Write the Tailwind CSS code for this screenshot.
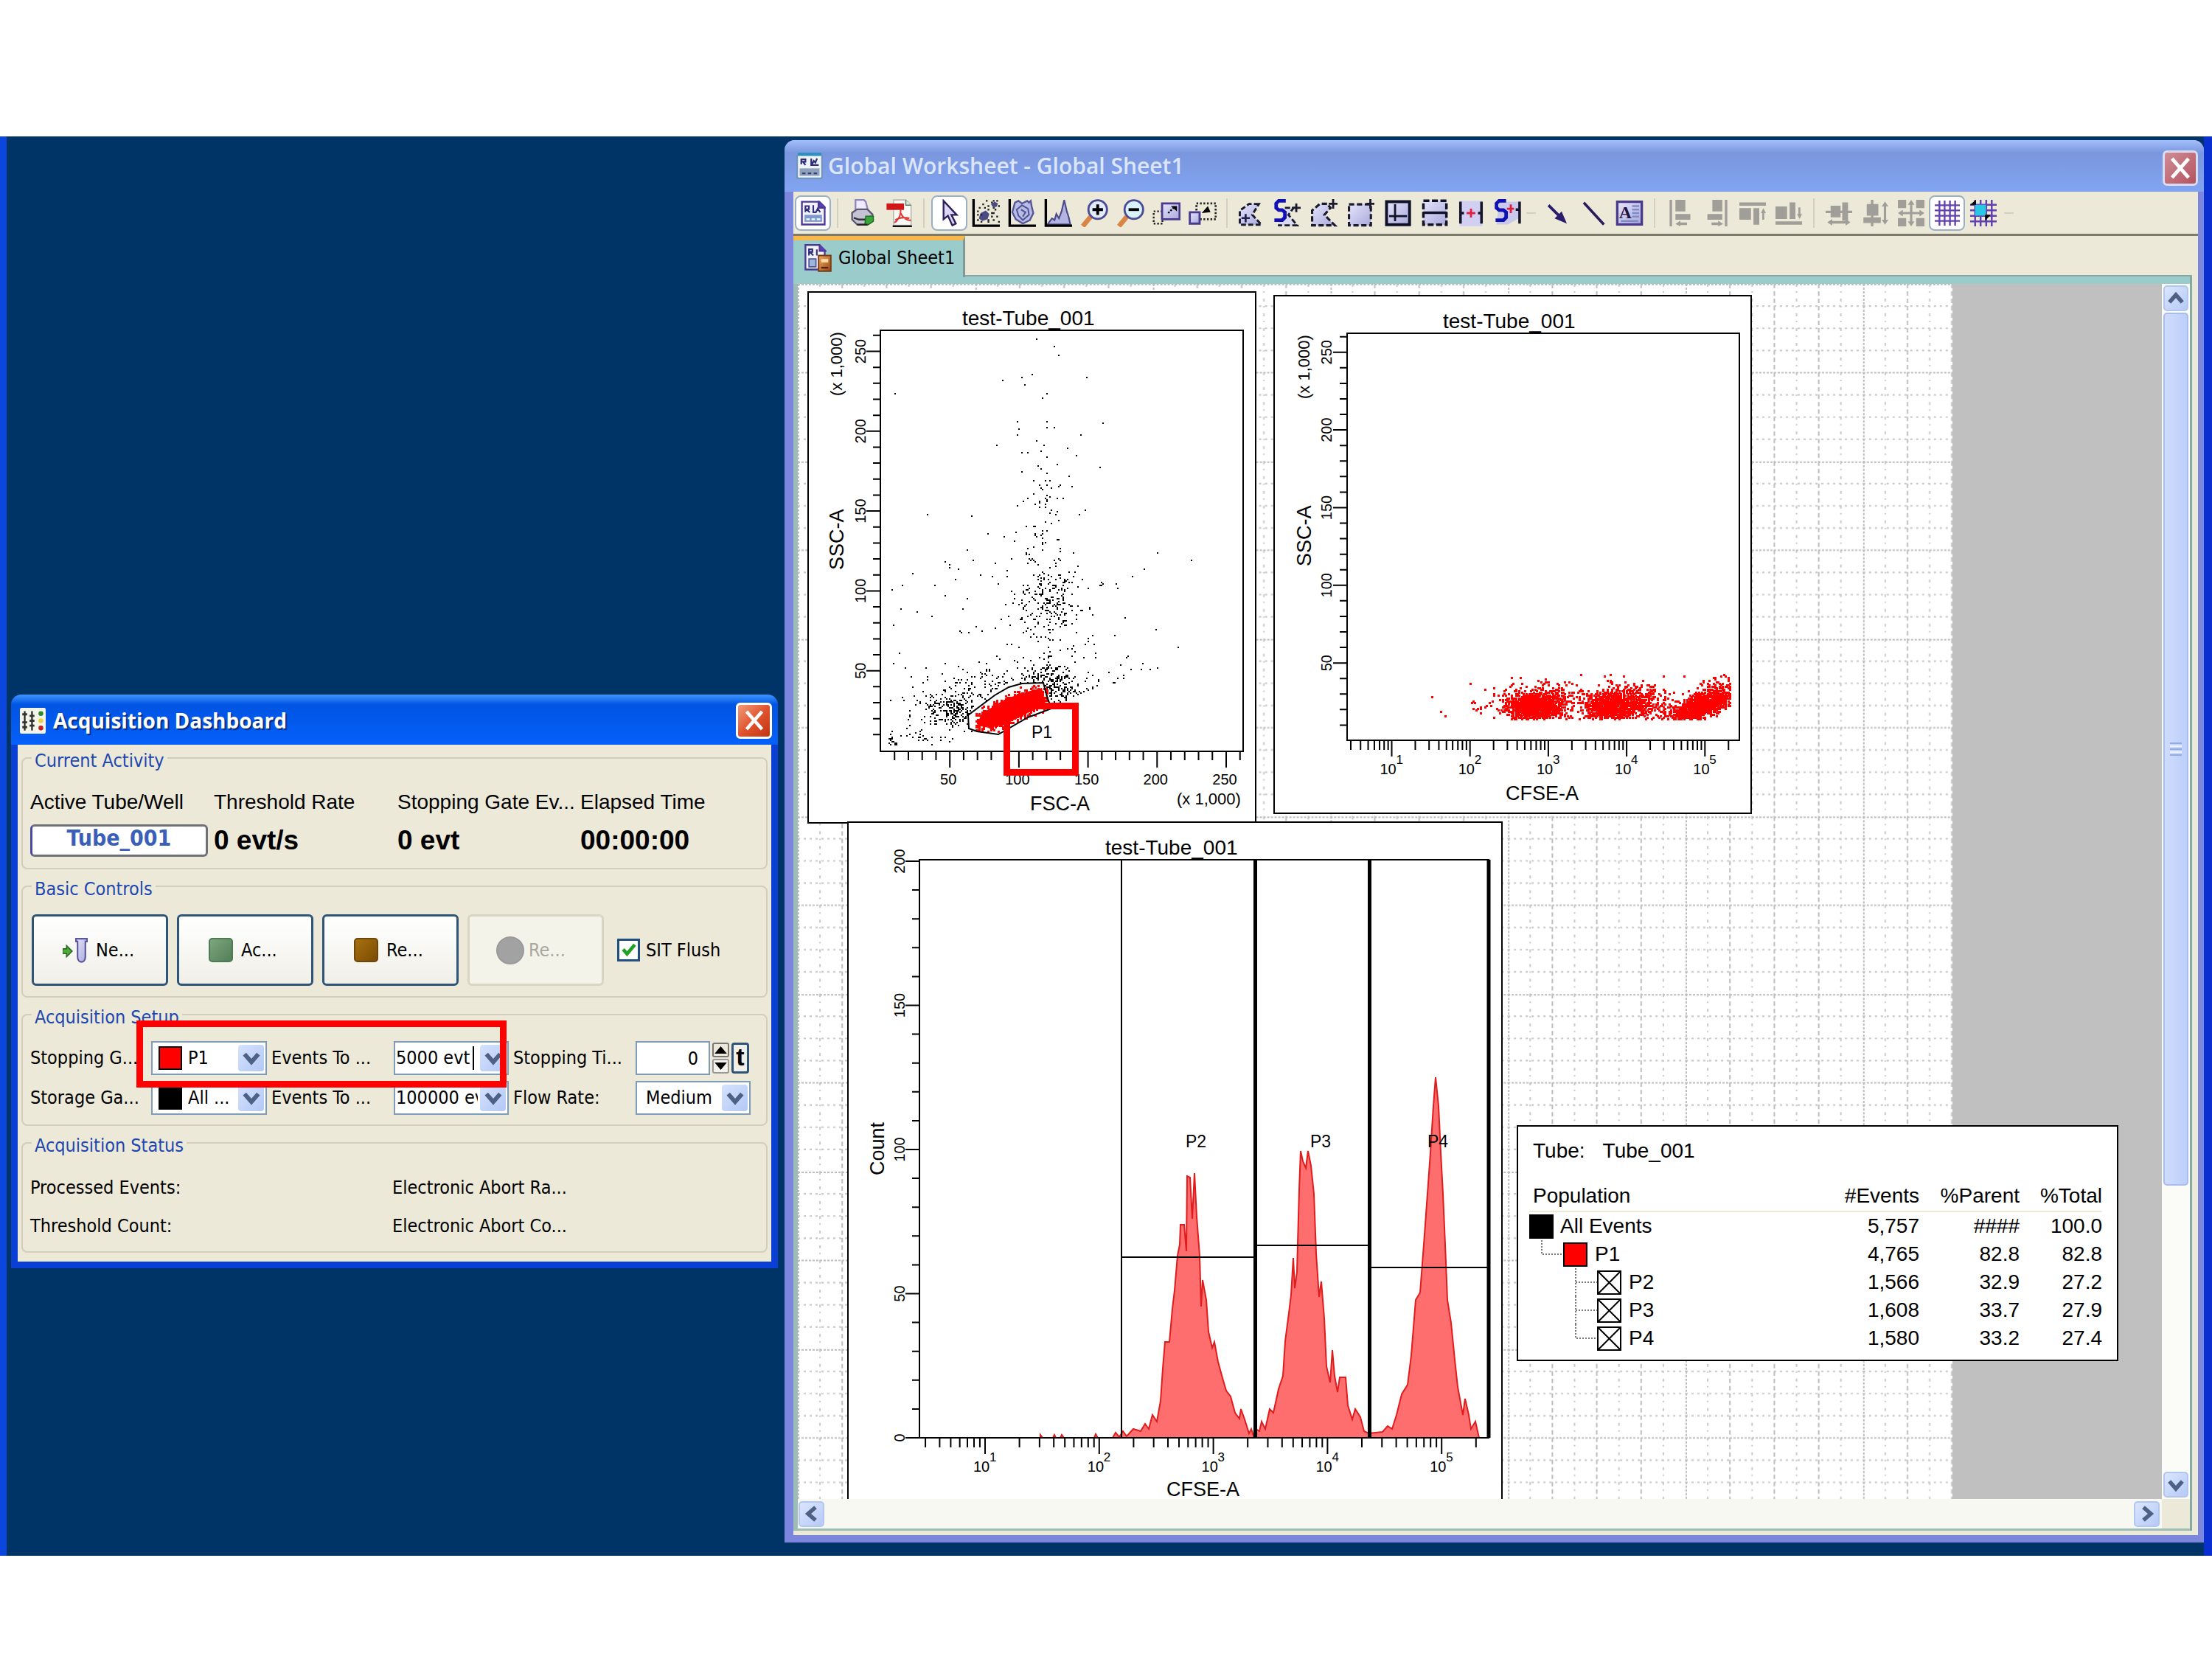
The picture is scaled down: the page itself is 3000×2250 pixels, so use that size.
<!DOCTYPE html>
<html lang="en">
<head>
<meta charset="utf-8">
<title>Global Worksheet - Global Sheet1</title>
<script src="https://cdn.jsdelivr.net/npm/@tailwindcss/browser@4"></script>
</head>
<body class="flex min-h-screen flex-col bg-white pt-[185px] pb-[140px] font-['DejaVu_Sans_Condensed','Noto_Sans',sans-serif] text-[25px] leading-[34px] text-black">
<svg class="absolute size-0" aria-hidden="true">
  <defs>
    <linearGradient id="lav" x1="0" y1="0" x2="1" y2="1"><stop offset="0" stop-color="#e6e4fb"/><stop offset="1" stop-color="#a9a9dc"/></linearGradient>
    <linearGradient id="wood" x1="0" y1="0" x2="1" y2="1"><stop offset="0" stop-color="#f0a860"/><stop offset="1" stop-color="#9a4a10"/></linearGradient>
    <pattern id="grid" width="240.8" height="240.8" patternUnits="userSpaceOnUse">
      <g fill="none" stroke="#bcbcbc" stroke-width="2">
        <path d="M60.2 0v240.8M120.4 0v240.8M180.6 0v240.8" stroke-dasharray="6 4"/>
        <path d="M30.1 0v240.8M90.3 0v240.8M150.5 0v240.8M210.7 0v240.8" stroke-dasharray="4 6 2 8" stroke="#c8c8c8"/>
        <path d="M0 30.1h240.8M0 60.2h240.8M0 90.3h240.8M0 150.5h240.8M0 180.6h240.8M0 210.7h240.8" stroke-dasharray="3 5" stroke="#c8c8c8"/>
        <path d="M1 0v240.8M0 1h240.8M0 120.4h240.8" stroke-dasharray="3 2"/>
      </g>
    </pattern>
    <symbol id="chev" viewBox="0 0 12 12"><path d="M2.5 4l3.5 4 3.5-4" fill="none" stroke="#4d6185" stroke-width="2.2"/></symbol>
    <symbol id="sheet" viewBox="0 0 16 16"><path d="M1.5 1.5h10l3 3v10h-13z" fill="#f4f2ff" stroke="#4b3a94"/><path d="M11 1v4h4" fill="#5a3fb4" stroke="#4b3a94"/><path d="M3.500 7.500V4h2v1.800h-1.500l2 1.700M8 3.500v4h1.500l1-2 1.500 2" fill="none" stroke="#30307c" stroke-width=".9"/><path d="M3 9h10v4H3z" fill="#7d9ad0"/><path d="M4 11.500h2m1 0h2m1 0h2" stroke="#fff"/></symbol>
  </defs>
</svg>

<main class="relative flex-1 overflow-hidden border-r-[11px] border-l-[9px] border-r-[#0a2fd0] border-l-[#0b46de] bg-[#003366]">

  <!-- Acquisition Dashboard -->
  <section class="absolute top-[757px] left-[6px] w-[1040px] rounded-t-[14px] bg-[#0a3fd6] px-[9px] pb-[9px]">
    <header class="-mx-[9px] flex h-[68px] items-center rounded-t-[14px] bg-linear-to-b from-[#3d95ff] via-[#0054e3] via-20% to-[#0560fa] pt-[2px] pr-[8px] pl-[12px]">
      <svg class="mr-[10px] size-[35px]" viewBox="0 0 16 16"><rect width="16" height="16" rx="1" fill="#f3f5ea"/><path d="M3 2v12M7.500 2v12" stroke="#222" stroke-width="1"/><path d="M1.500 4h3M1.500 9h3M1.500 12h3M6 5h3M6 8h3M6 11h3" stroke="#333" stroke-width="1.300"/><circle cx="13" cy="3.500" r="1.500" fill="#2f8a2f"/><circle cx="13" cy="8" r="1.500" fill="#e8cf4a"/><circle cx="13" cy="12.500" r="1.500" fill="#c02020"/></svg>
      <h1 class="flex-1 font-['Open_Sans',sans-serif] text-[28px] leading-[40px] font-bold text-white [text-shadow:2px_2px_1px_#0a2a80]">Acquisition Dashboard</h1>
      <button class="flex size-[49px] items-center justify-center rounded-[6px] border-[3px] border-white bg-linear-to-br from-[#f09a78] via-[#e0532e] to-[#c03410]" aria-label="Close dashboard"><svg class="size-[30px]" viewBox="0 0 10 10"><path d="M1.500 1l7 8M8.500 1l-7 8" stroke="#fff" stroke-width="1.500"/></svg></button>
    </header>
    <div class="flex flex-col gap-[7px] bg-[#ece9d8] px-[5px] pt-[2px] pb-[12px]">
      <fieldset class="rounded-[8px] border-2 border-[#d2ceba] px-[10px] pb-[15px]">
        <legend class="ml-[2px] px-[4px] pt-[8px] leading-[24px] text-[#2046b0]">Current Activity</legend>
        <div class="grid grid-cols-[249px_249px_248px_1fr] gap-y-[13px] pt-[27px] font-['Liberation_Sans',sans-serif] text-[28px] whitespace-nowrap">
          <span>Active Tube/Well</span><span>Threshold Rate</span><span>Stopping Gate Ev...</span><span>Elapsed Time</span>
          <button class="mr-[8px] h-[44px] rounded-[6px] border-[3px] border-[#6f7078] border-l-[#4a48a0] bg-white pb-[6px] font-['DejaVu_Sans_Condensed','Noto_Sans',sans-serif] text-[30px] leading-[32px] font-bold text-[#3a5fb8]">Tube_001</button>
          <output class="text-[37px] leading-[44px] font-bold">0 evt/s</output>
          <output class="text-[37px] leading-[44px] font-bold">0 evt</output>
          <output class="text-[37px] leading-[44px] font-bold">00:00:00</output>
        </div>
      </fieldset>

      <fieldset class="rounded-[8px] border-2 border-[#d2ceba] px-[12px] pb-[14px]">
        <legend class="px-[4px] pt-[8px] leading-[24px] text-[#2046b0]">Basic Controls</legend>
        <div class="flex items-center gap-[12px] pt-[22px]">
          <button class="flex h-[97px] w-[185px] items-center gap-[11px] rounded-[6px] border-[3px] border-[#2f5479] bg-linear-to-b from-white to-[#f0efe8] pl-[39px]"><svg class="size-[34px]" viewBox="0 0 16 16"><path d="M0 7h2.500V5l3.500 3.500-3.500 3.500V10H0z" fill="#4fae3a" stroke="#2c6b22" stroke-width=".8"/><path d="M8.500 .500h7v1.800h-1V12c0 4.500-5 4.500-5 0V2.300h-1z" fill="url(#lav)" stroke="#5b56a0"/></svg>Ne...</button>
          <button class="flex h-[97px] w-[185px] items-center gap-[11px] rounded-[6px] border-[3px] border-[#2f5479] bg-linear-to-b from-white to-[#f0efe8] pl-[40px]"><span class="size-[33px] rounded-[5px] border-2 border-[#4d7a55] bg-linear-to-br from-[#7fa67f] to-[#527f58]"></span>Ac...</button>
          <button class="flex h-[97px] w-[185px] items-center gap-[11px] rounded-[6px] border-[3px] border-[#2f5479] bg-linear-to-b from-white to-[#f0efe8] pl-[40px]"><span class="size-[33px] rounded-[5px] border-2 border-[#6e4608] bg-linear-to-br from-[#a87010] to-[#7c4c05]"></span>Re...</button>
          <button disabled class="flex h-[97px] w-[185px] items-center gap-[6px] rounded-[6px] border-[3px] border-[#d8d5c4] bg-[#f4f3ea] pl-[36px] text-[#aaa89c]"><span class="size-[38px] rounded-full border-2 border-[#9a9a9a] bg-[#a2a2a2]"></span>Re...</button>
          <label class="ml-[6px] flex items-center gap-[8px]"><span class="relative size-[31px]"><input type="checkbox" checked class="size-[31px] appearance-none border-[3px] border-[#1f4f80] bg-white"><svg class="pointer-events-none absolute inset-[5px] size-[21px]" viewBox="0 0 10 10"><path d="M1.500 4.500L4 7.500l5-6" fill="none" stroke="#21a121" stroke-width="2.200"/></svg></span>SIT Flush</label>
        </div>
      </fieldset>

      <fieldset class="rounded-[8px] border-2 border-[#d2ceba] px-[10px] pb-[13px]">
        <legend class="ml-[2px] px-[4px] pt-[8px] leading-[24px] text-[#2046b0]">Acquisition Setup</legend>
        <div class="grid grid-cols-[164px_157px_172px_156px_172px_156px] items-center gap-y-[8px] pt-[20px] whitespace-nowrap">
          <label for="stopGate">Stopping G...</label>
          <div class="relative flex h-[46px] items-center border-2 border-[#7f9db9] bg-white pl-[8px]">
            <span class="size-[32px] shrink-0 border-2 border-black bg-[#ff0000]"></span>
            <select id="stopGate" class="w-full appearance-none bg-transparent pl-[8px] leading-[34px]"><option>P1</option></select>
            <span class="pointer-events-none absolute top-[3px] right-[2px] flex h-[36px] w-[35px] items-center justify-center rounded-[4px] bg-linear-to-br from-[#d5e2fd] to-[#b3c8f6]"><svg class="size-[32px]"><use href="#chev"/></svg></span>
          </div>
          <label for="stopEvents" class="pl-[6px]">Events To ...</label>
          <div class="relative flex h-[46px] items-center border-2 border-[#7f9db9] bg-white pr-[40px]">
            <input id="stopEvents" type="text" value="5000 evt" class="w-full min-w-0 bg-transparent pl-[1px]">
            <span class="absolute top-[5px] left-[105px] h-[32px] w-[2px] bg-black"></span>
            <span class="pointer-events-none absolute top-[3px] right-[2px] flex h-[36px] w-[35px] items-center justify-center rounded-[4px] bg-linear-to-br from-[#d5e2fd] to-[#b3c8f6]"><svg class="size-[32px]"><use href="#chev"/></svg></span>
          </div>
          <label for="stopTime" class="pl-[6px]">Stopping Ti...</label>
          <div class="flex h-[46px] items-center gap-[3px]">
            <input id="stopTime" type="text" value="0" class="h-[46px] w-[101px] border-2 border-[#7f9db9] bg-white pr-[14px] text-right">
            <div class="flex h-[42px] w-[23px] flex-col justify-between">
              <button class="flex h-[20px] items-center justify-center rounded-[3px] border-2 border-[#777] bg-[#ece9d8]" aria-label="Increase"><svg class="h-[10px] w-[17px]" viewBox="0 0 10 6"><path d="M0 6l5-6 5 6z"/></svg></button>
              <button class="flex h-[20px] items-center justify-center rounded-[3px] border-2 border-[#999] bg-[#f4f2ea]" aria-label="Decrease"><svg class="h-[10px] w-[17px]" viewBox="0 0 10 6"><path d="M0 0l5 6 5-6z"/></svg></button>
            </div>
            <button class="flex h-[42px] w-[24px] items-center justify-center rounded-[4px] border-[3px] border-[#2f5479] bg-[#f0efe8] pb-[4px] font-['Liberation_Sans',sans-serif] text-[34px] leading-[30px] font-bold">t</button>
          </div>
          <label for="storeGate">Storage Ga...</label>
          <div class="relative flex h-[46px] items-center border-2 border-[#7f9db9] bg-white pl-[8px]">
            <span class="size-[32px] shrink-0 bg-black"></span>
            <select id="storeGate" class="w-full appearance-none bg-transparent pl-[8px] leading-[34px]"><option>All ...</option></select>
            <span class="pointer-events-none absolute top-[3px] right-[2px] flex h-[36px] w-[35px] items-center justify-center rounded-[4px] bg-linear-to-br from-[#d5e2fd] to-[#b3c8f6]"><svg class="size-[32px]"><use href="#chev"/></svg></span>
          </div>
          <label for="recEvents" class="pl-[6px]">Events To ...</label>
          <div class="relative flex h-[46px] items-center border-2 border-[#7f9db9] bg-white pr-[40px]">
            <input id="recEvents" type="text" value="100000 evt" class="w-full min-w-0 bg-transparent pl-[1px]">
            <span class="pointer-events-none absolute top-[3px] right-[2px] flex h-[36px] w-[35px] items-center justify-center rounded-[4px] bg-linear-to-br from-[#d5e2fd] to-[#b3c8f6]"><svg class="size-[32px]"><use href="#chev"/></svg></span>
          </div>
          <label for="flow" class="pl-[6px]">Flow Rate:</label>
          <div class="relative flex h-[46px] items-center border-2 border-[#7f9db9] bg-white pl-[12px]">
            <select id="flow" class="w-full appearance-none bg-transparent leading-[34px]"><option>Medium</option></select>
            <span class="pointer-events-none absolute top-[3px] right-[2px] flex h-[36px] w-[35px] items-center justify-center rounded-[4px] bg-linear-to-br from-[#d5e2fd] to-[#b3c8f6]"><svg class="size-[32px]"><use href="#chev"/></svg></span>
          </div>
        </div>
      </fieldset>

      <fieldset class="rounded-[8px] border-2 border-[#d2ceba] px-[10px] pb-[17px]">
        <legend class="ml-[2px] px-[4px] pt-[8px] leading-[24px] text-[#2046b0]">Acquisition Status</legend>
        <div class="grid grid-cols-[491px_1fr] gap-y-[18px] pt-[28px]">
          <span>Processed Events:</span><span>Electronic Abort Ra...</span>
          <span>Threshold Count:</span><span>Electronic Abort Co...</span>
        </div>
      </fieldset>
    </div>
    <!-- highlight around the stopping gate controls -->
    <div class="pointer-events-none absolute top-[442px] left-[170px] h-[91px] w-[502px] border-[9px] border-[#ff0000]"></div>
  </section>

  <!-- Global Worksheet -->
  <section class="absolute top-[5px] right-0 bottom-[18px] left-[1055px] flex flex-col rounded-t-[14px] bg-[#7b86dc] pr-[8px] pb-[10px] pl-[12px]">
    <header class="-mr-[8px] -ml-[12px] flex h-[70px] shrink-0 items-center rounded-t-[14px] bg-linear-to-b from-[#a3bffb] via-[#7a96df] via-25% to-[#82a4f0] pr-[8px] pl-[16px]">
      <svg class="mr-[7px] size-[36px]" viewBox="0 0 16 16"><rect x=".5" y="1" width="15" height="14.500" rx="1" fill="#eef4fa" stroke="#6f95b8"/><path d="M1 1h14" stroke="#2f8fc0" stroke-width="2"/><path d="M3 7V4h2.500v1.500H4l1.500 2M9 3.500v4h4.500M9.500 7l1-2 1 1 1-2.500" fill="none" stroke="#2c2c78"/><path d="M2 9.500h12v4.500H2z" fill="#8fa0bc"/><path d="M3.500 12.500h2m1.500 0h2m1.500 0h2" stroke="#30406c"/></svg>
      <h2 class="flex-1 font-['Open_Sans',sans-serif] text-[30px] leading-[40px] font-semibold text-[#dbe6fa]">Global Worksheet - Global Sheet1</h2>
      <button class="mt-[6px] flex size-[48px] items-center justify-center rounded-[6px] border-[3px] border-[#d9dcf2] bg-linear-to-br from-[#cf8d97] to-[#b3535f]" aria-label="Close worksheet"><svg class="size-[32px]" viewBox="0 0 10 10"><path d="M1.500 1l7 8M8.500 1l-7 8" stroke="#fff" stroke-width="1.500"/></svg></button>
    </header>

    <div class="flex h-[60px] shrink-0 items-center border-b-[3px] border-[#7c7a6a] bg-[#ece9d8] pl-[2px]" role="toolbar" aria-label="Worksheet tools">
      <button class="flex h-[48px] w-[49px] items-center justify-center rounded-[8px] border-2 border-[#9ab0c4] bg-white" aria-label="Worksheet view"><svg class="size-[38px]"><use href="#sheet"/></svg></button>
      <span class="mr-[8px] ml-[8px] h-[40px] w-[2px] bg-[#d4d0bd]"></span>
      <button class="flex w-[49px] justify-center" aria-label="Print"><svg class="size-[37px]" viewBox="0 0 16 16"><path d="M4 .500h5l1 1 1.500 6H4z" fill="#efeaff" stroke="#8d86b8"/><path d="M2 8l3-2h6l3 3v3l-3 3H5l-3-3z" fill="#c4c2d4" stroke="#5b5970"/><path d="M3 11l3 1h4l3-2" fill="none" stroke="#333"/><path d="M10 10h4.500v3l-3 2h-2z" fill="#3aa53a" stroke="#1d6a1d" stroke-width=".6"/><path d="M5 15h6" stroke="#222"/></svg></button>
      <button class="flex w-[49px] justify-center" aria-label="Export PDF"><svg class="size-[38px]" viewBox="0 0 16 16"><path d="M5 .5h7l3 3V15H5z" fill="#fbfbf6" stroke="#b9b9b0" stroke-width=".7"/><path d="M12 .5v3h3" fill="#dfe8dd" stroke="#4f8060" stroke-width=".6"/><path d="M1 2.500h10v3.700H1z" fill="#d01818"/><path d="M9 6c.5 4-2.500 7-3.500 7.500M9 8c1.500 3 4 4.500 6 4M6 12c3-2 6-1.500 8-1" fill="none" stroke="#e03a3a" stroke-width=".9"/><path d="M4.500 15.500h11" stroke="#111"/></svg></button>
      <span class="mr-[9px] ml-[9px] h-[40px] w-[2px] bg-[#d4d0bd]"></span>
      <button class="flex h-[48px] w-[49px] items-center justify-center rounded-[8px] border-2 border-[#9ab0c4] bg-white" aria-label="Select"><svg class="size-[38px]" viewBox="0 0 16 16"><path d="M4.500 1v10.500l2.500-2 2.500 5.500 2-1-2.500-5h3z" fill="#dcd8f6" stroke="#2d1f5a"/></svg></button>
      <button class="flex w-[49px] justify-center" aria-label="Dot plot"><svg class="size-[38px]" viewBox="0 0 16 16"><path d="M1 0v15.200h15" fill="none" stroke="#000" stroke-width="1.400"/><path d="M5 8l3-1.500 2 2-1 3-3 1-2-1.500zM11 3l2-1.500 2 1-1 2h-2z" fill="#4a4a84"/><path d="M4 5h1m1-2h1m2 1h1m3 2h1m-2 2h1m1 2h1m-3 2h1M3 7h1m-1 5h1m3-7h1m3-3h1m3 2h1m-1 9h1M5 13h1m3 0h1m-1-7h1m1 2h1m0-7h1M8 1h1m5 0h1m-3 4h1m-8 4h1m5 1h1m-9-1h1m5 3h1" stroke="#222"/></svg></button>
      <button class="flex w-[49px] justify-center" aria-label="Contour plot"><svg class="size-[38px]" viewBox="0 0 16 16"><path d="M1 0v15.200h15" fill="none" stroke="#000" stroke-width="1.400"/><path d="M4 2l2-1 2 1.500L11 1l1 1 1-1 .500 3 1 4-2 4-4 2-4-2.500-2-4z" fill="#b9bce4" stroke="#55559a"/><path d="M5 6l3-2.500 3.500 2L12 9l-3.500 3L6 9.500zM7.500 6l2.500 1.500-1.500 2.500" fill="none" stroke="#55559a" stroke-width=".9"/></svg></button>
      <button class="flex w-[49px] justify-center" aria-label="Histogram"><svg class="size-[38px]" viewBox="0 0 16 16"><path d="M2 14.500L4.500 11l1.500 1 1-3.500L8.500 11 10 7l1.500-6.500L13 7l1 3 1 4.500z" fill="#b4b4e2" stroke="#4b4b8a" stroke-width=".9"/><path d="M1 0v15.200h15" fill="none" stroke="#000" stroke-width="1.400"/></svg></button>
      <button class="flex w-[49px] justify-center" aria-label="Zoom in"><svg class="size-[38px]" viewBox="0 0 16 16"><path d="M1.500 15.500L6 10" stroke="#d98545" stroke-width="2.800"/><circle cx="10" cy="6" r="5.300" fill="#e3ecfc" stroke="#4a4a96" stroke-width="1.200"/><path d="M7 6h6M10 3v6" stroke="#000" stroke-width="1.600"/></svg></button>
      <button class="flex w-[49px] justify-center" aria-label="Zoom out"><svg class="size-[38px]" viewBox="0 0 16 16"><path d="M1.500 15.500L6 10" stroke="#d98545" stroke-width="2.800"/><circle cx="10" cy="6" r="5.300" fill="#d8f2fc" stroke="#4a4a96" stroke-width="1.200"/><path d="M7 6h6" stroke="#000" stroke-width="1.600"/></svg></button>
      <button class="flex w-[49px] justify-center" aria-label="Enlarge"><svg class="size-[38px]" viewBox="0 0 16 16"><path d="M.7 7h5v7H.7z" fill="none" stroke="#222" stroke-width="1" stroke-dasharray="1 1"/><path d="M5.500 2.500h10v9h-10z" fill="url(#lav)" stroke="#4a3a8c" stroke-width="1.200"/><path d="M9 8l3-3" stroke="#000" stroke-dasharray="1 .8"/><path d="M10.500 4H14v3z"/></svg></button>
      <button class="flex w-[49px] justify-center" aria-label="Reduce"><svg class="size-[38px]" viewBox="0 0 16 16"><path d="M4.500 2.500h11v9h-11z" fill="none" stroke="#222" stroke-width="1.200" stroke-dasharray="1 1"/><path d="M.7 7.500h5.600V14H.7z" fill="url(#lav)" stroke="#4a3a8c" stroke-width="1.200"/><path d="M7.500 8L11 4l1.500 3.500z"/></svg></button>
      <span class="mr-[5px] ml-[8px] h-[40px] w-[2px] bg-[#d4d0bd]"></span>
      <button class="flex w-[50px] justify-center" aria-label="Auto polygon gate"><svg class="size-[36px]" viewBox="0 0 16 16"><path d="M13.500 2.500h-6L2 6.500V15h13L9.500 9z" fill="url(#lav)" stroke="#1a1a2e" stroke-width="1.300" stroke-dasharray="3 1.400"/><path d="M3 11h5M5.500 8.500v5" stroke="#20204a" stroke-width="1.200"/></svg></button>
      <button class="flex w-[50px] justify-center" aria-label="Snap-to gate"><svg class="size-[38px]" viewBox="0 0 16 16"><path d="M7 5h5l-3 4 5 6H3" fill="#dcdaf2" stroke="#1a1a2e" stroke-width="1.200" stroke-dasharray="3 1.400"/><path d="M11 5h5M13.500 2.500v5" stroke="#1a1a2e" stroke-width="1.200"/><path d="M7.500 1H3.500L2 2.500V5l1.500 1.300h2L7 7.500v3L5.500 12H1" fill="none" stroke="#1010b4" stroke-width="2"/></svg></button>
      <button class="flex w-[50px] justify-center" aria-label="Polygon gate"><svg class="size-[38px]" viewBox="0 0 16 16"><path d="M10 2.700H6L1.500 6.500V15h13L8.500 9l3.500-4z" fill="url(#lav)" stroke="#1a1a2e" stroke-width="1.300" stroke-dasharray="3 1.400"/><path d="M11 2.700h5M13.500 0v5.500" stroke="#1a1a2e" stroke-width="1.200"/></svg></button>
      <button class="flex w-[50px] justify-center" aria-label="Rectangle gate"><svg class="size-[38px]" viewBox="0 0 16 16"><path d="M1.500 3H14v12H1.500z" fill="url(#lav)" stroke="#1a1a2e" stroke-width="1.300" stroke-dasharray="3 1.500"/><path d="M11.500 2.700H16M13.700 0v5.500" stroke="#1a1a2e" stroke-width="1.200"/></svg></button>
      <button class="flex w-[50px] justify-center" aria-label="Quadrant gate"><svg class="size-[37px]" viewBox="0 0 16 16"><path d="M1.500 1.500h13.500v13.500H1.500z" fill="url(#lav)" stroke="#111128" stroke-width="1.700"/><path d="M6.500 3v10M3 10h10.500" stroke="#111128" stroke-width="1.200"/></svg></button>
      <button class="flex w-[50px] justify-center" aria-label="Interval gate"><svg class="size-[37px]" viewBox="0 0 16 16"><path d="M1.500 1h13.500v14H1.500z" fill="url(#lav)" stroke="#111128" stroke-width="1.500" stroke-dasharray="3.500 1.500"/><path d="M1.500 8H15" stroke="#111128" stroke-width="1.500"/></svg></button>
      <button class="flex w-[50px] justify-center" aria-label="Range gate"><svg class="size-[38px]" viewBox="0 0 16 16"><path d="M1.500 1h13v14.500h-13z" fill="#d2d0f2"/><path d="M2 1.500V14M14 1.500V14M2 8h2M12 8h2" stroke="#15152c" stroke-width="1.500"/><path d="M5.500 8h5M8 5.500v5" stroke="#e02040" stroke-width="1.200"/></svg></button>
      <button class="flex w-[50px] justify-center" aria-label="Snap-to interval"><svg class="size-[38px]" viewBox="0 0 16 16"><path d="M3 1.500h12v9l-7 4H1.500z" fill="#c9c9ee"/><path d="M14.700 1.500V14M12.500 6h2" stroke="#15152c" stroke-width="1.500"/><path d="M7.500 5.500h4M9.700 3v5" stroke="#e02040" stroke-width="1.200"/><path d="M7 1H3L1.500 2.500V5L3 6.300h2.500L7 7.500v3L5.500 12H1" fill="none" stroke="#1010b4" stroke-width="2"/></svg></button>
      <span class="mr-[4px] h-[2px] w-[13px] bg-[#d4d0bd]"></span>
      <button class="flex w-[49px] justify-center" aria-label="Arrow"><svg class="size-[38px]" viewBox="0 0 16 16"><path d="M3 3.500l7 7" stroke="#2a1c6c" stroke-width="1.600"/><path d="M13.500 14L6.500 11 10.500 7z" fill="#2a1c6c"/></svg></button>
      <button class="flex w-[49px] justify-center" aria-label="Line"><svg class="size-[38px]" viewBox="0 0 16 16"><path d="M2.500 2L14 14.500" stroke="#2a1c5c" stroke-width="1.500"/></svg></button>
      <button class="flex w-[49px] justify-center" aria-label="Text box"><svg class="size-[38px]" viewBox="0 0 16 16"><path d="M1 1.500h14v13H1z" fill="url(#lav)" stroke="#4a3a8c" stroke-width="1.400"/><path d="M9.500 4h4m-4 2h4m-4 2h4m-4 2h4M3 12.500h10" stroke="#7f8bc8"/><text x="2" y="11" class="fill-[#22123f] font-['Liberation_Serif',serif] text-[10px] font-bold">A</text></svg></button>
      <span class="mr-[9px] ml-[9px] h-[40px] w-[2px] bg-[#d4d0bd]"></span>
      <button class="flex w-[49px] justify-center" aria-label="Align left"><svg class="size-[36px]" viewBox="0 0 16 16" fill="#a09e98"><path d="M1.500 0h1.500v16H1.500zM5 0h6v7H5zM5 8.500h9v3.500H5zM5 14.500l3-2v1.200h4v1.500H8V16z"/></svg></button>
      <button class="flex w-[49px] justify-center" aria-label="Align right"><svg class="size-[36px]" viewBox="0 0 16 16" fill="#a09e98"><path d="M13 0h1.500v16H13zM5.500 0h6v7h-6zM2.500 8.500h9v3.500h-9zM12 14.500l-3-2v1.200H5v1.500h4V16z"/></svg></button>
      <button class="flex w-[49px] justify-center" aria-label="Align top"><svg class="size-[36px]" viewBox="0 0 16 16" fill="#a09e98"><path d="M0 1.500h16V3.500H0zM0 5h7v7H0zM8.500 5H12v10H8.500zM14.500 5l1.500 3h-1v4h-1.200V8h-.8z"/></svg></button>
      <button class="flex w-[49px] justify-center" aria-label="Align bottom"><svg class="size-[36px]" viewBox="0 0 16 16" fill="#a09e98"><path d="M0 13h16v2H0zM0 4h7v7.500H0zM8.500 1.500H12v10H8.500zM14.500 11.500l1.500-3h-1v-4h-1.200v4h-.8z"/></svg></button>
      <span class="mr-[8px] ml-[9px] h-[40px] w-[2px] bg-[#d4d0bd]"></span>
      <button class="flex w-[49px] justify-center" aria-label="Center horizontally"><svg class="size-[36px]" viewBox="0 0 16 16" fill="#a09e98"><path d="M0 6.500h16v1.500H0zM3 3.500h6v7H3zM10 1.500h3.500v11H10zM1 13.500l3-2v1.300h8v-1.300l3 2-3 2v-1.200H4v1.200z"/></svg></button>
      <button class="flex w-[49px] justify-center" aria-label="Center vertically"><svg class="size-[36px]" viewBox="0 0 16 16" fill="#a09e98"><path d="M5.500 0H7v16H5.500zM3 2.500h7v7H3zM1 10.500h10.500V14H1zM14 1l2 3h-1.300v8H16l-2 3-2-3h1.300V4H12z"/></svg></button>
      <button class="flex w-[49px] justify-center" aria-label="Distribute"><svg class="size-[36px]" viewBox="0 0 16 16" fill="#a09e98"><path d="M0 0h5v5H0zM11 0h5v5h-5zM0 11h5v5H0zM11 11h5v5h-5zM8 0l2 3H8.700v4.300H13V6l3 2-3 2V8.700H8.700V13H10l-2 3-2-3h1.300V8.700H3V10L0 8l3-2v1.300h4.300V3H6z"/></svg></button>
      <button class="flex h-[48px] w-[49px] items-center justify-center rounded-[8px] border-2 border-[#9ab0c4] bg-white" aria-label="Show grid"><svg class="size-[34px]" viewBox="0 0 16 16"><path d="M3 0v16M6.300 0v16M9.700 0v16M13 0v16M0 3h16M0 6.300h16M0 9.700h16M0 13h16" stroke="#6240b0" stroke-width="1.100"/></svg></button>
      <button class="flex w-[49px] justify-center" aria-label="Snap to grid"><svg class="size-[36px]" viewBox="0 0 16 16"><path d="M3 0v16M6.300 0v16M9.700 0v16M13 0v16M0 3h16M0 6.300h16M0 9.700h16M0 13h16" stroke="#6240b0" stroke-width="1.100"/><path d="M3 3h6.500v6.500H3z" fill="#28c8e4"/><path d="M0 3l3.500-3v3zM9 9h3.500L9 12.500z"/></svg></button>
      <span class="ml-[4px] h-[2px] w-[13px] bg-[#d4d0bd]"></span>
    </div>

    <div class="flex min-h-0 flex-1 flex-col bg-[#ece9d8] pb-[6px]">
      <nav class="flex h-[53px] shrink-0">
        <button class="relative z-10 flex h-[56px] w-[233px] items-center gap-[9px] border-t-[6px] border-r-[3px] border-t-[#f9b84a] border-r-[#7f9a98] bg-[#9acccc] pb-[3px] pl-[14px] leading-[34px]"><svg class="size-[38px]" viewBox="0 0 16 16"><path d="M1 .500h8l3 3v11H1z" fill="#f4f2ff" stroke="#4b3a94"/><path d="M9 0v4h4" fill="#5a3fb4" stroke="#4b3a94" stroke-width=".8"/><path d="M3 6.500V3h2v1.500H3.500l2 2M7.500 3v3.500" fill="none" stroke="#30307c" stroke-width=".9"/><path d="M3 8.500h4v4.500H3z" fill="#9db4dc" stroke="#4b5a94" stroke-width=".7"/><path d="M8.500 6.500H15.500v9h-7z" fill="url(#wood)" stroke="#7a3a10" stroke-width=".8"/><path d="M10 8.500h4v2h-4z" fill="#ffd9a8"/><path d="M10 13.500h4" stroke="#522"/></svg>Global Sheet1</button>
      </nav>
      <div class="mr-[8px] flex min-h-0 flex-1 flex-col border-t-[2px] border-r-[3px] border-[#87a9a6]">
        <div class="h-[10px] shrink-0 bg-[#9acccc]"></div>
        <div class="flex min-h-0 flex-1 border-b-[3px] border-l-[6px] border-[#9cbcb8]">
          <div class="flex min-w-0 flex-1 flex-col">
            <div class="relative min-h-0 flex-1 overflow-hidden bg-[#c0c0c0]">
              <svg class="absolute inset-y-0 left-0 h-full w-[1566px] bg-white"><rect width="100%" height="100%" fill="url(#grid)"/></svg>

              <figure class="absolute top-[10px] left-[13px]">
                <svg width="609" height="722" class="block overflow-visible font-['Liberation_Sans',sans-serif]">
                  <rect x="1" y="1" width="607" height="720" fill="#fff" stroke="#000" stroke-width="2"/>
                  <rect x="99" y="53" width="492" height="571" fill="none" stroke="#000" stroke-width="2"/>
                  <g id="fsc"></g>
                  <text x="210" y="46" class="text-[28px]">test-Tube_001</text>
                  <text x="302" y="704" class="text-[27px]">FSC-A</text>
                  <text x="501" y="696" class="text-[22px]">(x 1,000)</text>
                  <text transform="translate(49 378) rotate(-90)" class="text-[27px]">SSC-A</text>
                  <text transform="translate(47 142) rotate(-90)" class="text-[22px]">(x 1,000)</text>
                  <text x="304" y="606" class="text-[23px]">P1</text>
                  <rect x="270.500" y="562.500" width="93" height="90" fill="none" stroke="#f00" stroke-width="9"/>
                </svg>
              </figure>

              <figure class="absolute top-[15px] left-[645px]">
                <svg width="649" height="704" class="block overflow-visible font-['Liberation_Sans',sans-serif]">
                  <rect x="1" y="1" width="647" height="702" fill="#fff" stroke="#000" stroke-width="2"/>
                  <rect x="100" y="52" width="532" height="552" fill="none" stroke="#000" stroke-width="2"/>
                  <g id="cfse"></g>
                  <text x="230" y="45" class="text-[28px]">test-Tube_001</text>
                  <text x="315" y="685" class="text-[27px]">CFSE-A</text>
                  <text transform="translate(51 368) rotate(-90)" class="text-[27px]">SSC-A</text>
                  <text transform="translate(49 141) rotate(-90)" class="text-[22px]">(x 1,000)</text>
                </svg>
              </figure>

              <figure class="absolute top-[729px] left-[67px]">
                <svg width="890" height="960" class="block overflow-visible font-['Liberation_Sans',sans-serif]">
                  <rect x="1" y="1" width="887" height="958" fill="#fff" stroke="#000" stroke-width="2"/>
                  <path id="hump" fill="#ff6e6e" stroke="#e01c1c" stroke-width="2" d="M262 836v-4l3 4h14l2-4 2 4h6l2-4 3 4h41l2-5 3 5H360L364 829 369 835 374 827 379 834 388 824 398 827 404 817 409 824 414 805 420 814 425 786 428 742 431 706 437 706 441 661 444 636 448 589 451 574 452 547 457 547 460 583 461 481 465 483 468 539 471 477 474 536 478 589 480 658 482 622 487 649 490 692 495 714 498 706 503 733 509 755 514 772 520 780 526 802 532 810 534 797 539 811 545 830 548 824 551 833 554 824 559 827 562 814 567 824 573 797 578 802 585 770 591 752 594 705 599 667 602 642 605 592 607 633 610 611 613 499 615 447 618 461 622 470 625 447 629 467 633 505 636 586 640 645 643 624 647 674 650 739 655 761 658 717 661 752 665 774 668 754 676 754 679 792 685 811 689 797 696 808 701 827 707 830 726 828 733 820 739 824 745 805 752 777 760 764 765 724 771 649 777 639 782 574 787 505 791 449 795 386 798 347 802 386 805 449 808 505 811 574 814 649 819 680 824 730 828 767 835 805 838 783 843 805 846 824 852 814 857 836z"/>
                  <rect x="98" y="52" width="772" height="784" fill="none" stroke="#000" stroke-width="2"/>
                  <path d="M372 52v784M372 591h181M553 575h155M708 605h162" stroke="#000" stroke-width="2"/>
                  <path d="M553.500 52v784M708.500 52v784M870 52v784" stroke="#000" stroke-width="5"/>
                  <g id="count"></g>
                  <text x="350" y="45" class="text-[28px]">test-Tube_001</text>
                  <text x="433" y="915" class="text-[27px]">CFSE-A</text>
                  <text transform="translate(50 480) rotate(-90)" class="text-[27px]">Count</text>
                  <text x="459" y="442" class="text-[23px]">P2</text>
                  <text x="628" y="442" class="text-[23px]">P3</text>
                  <text x="787" y="442" class="text-[23px]">P4</text>
                </svg>
              </figure>

              <div class="absolute top-[1141px] left-[975px] w-[816px] border-2 border-black bg-white pt-[14px] pr-[20px] pb-[10px] pl-[15px] font-['Liberation_Sans',sans-serif] text-[28px] leading-[38px]">
                <p class="mb-[21px] flex gap-[24px] pl-[5px]"><span>Tube:</span><span>Tube_001</span></p>
                <table class="w-full table-fixed border-collapse">
                  <colgroup><col><col class="w-[130px]"><col class="w-[136px]"><col class="w-[112px]"></colgroup>
                  <thead><tr class="h-[42px] border-b-2 border-[#ece9d8]"><th class="pl-[5px] text-left font-normal">Population</th><th class="text-right font-normal">#Events</th><th class="text-right font-normal">%Parent</th><th class="text-right font-normal">%Total</th></tr></thead>
                  <tbody class="text-right leading-[38px]">
                    <tr><td><div class="flex items-center gap-[9px]"><span class="size-[33px] bg-black"></span>All Events</div></td><td>5,757</td><td>####</td><td>100.0</td></tr>
                    <tr><td><div class="flex items-center"><svg class="h-[38px] w-[46px]"><path d="M17 0v19h29" fill="none" stroke="#777" stroke-width="2" stroke-dasharray="2 2"/></svg><span class="mr-[10px] size-[33px] border-2 border-black bg-[#ff0000]"></span>P1</div></td><td>4,765</td><td>82.8</td><td>82.8</td></tr>
                    <tr><td><div class="flex items-center"><svg class="h-[38px] w-[92px]"><path d="M63 0v38M63 19h29" fill="none" stroke="#777" stroke-width="2" stroke-dasharray="2 2"/></svg><svg class="mr-[10px] size-[33px]"><path d="M1 1h31v31H1zL32 32M32 1L1 32" fill="#fff" stroke="#000" stroke-width="2"/></svg>P2</div></td><td>1,566</td><td>32.9</td><td>27.2</td></tr>
                    <tr><td><div class="flex items-center"><svg class="h-[38px] w-[92px]"><path d="M63 0v38M63 19h29" fill="none" stroke="#777" stroke-width="2" stroke-dasharray="2 2"/></svg><svg class="mr-[10px] size-[33px]"><path d="M1 1h31v31H1zL32 32M32 1L1 32" fill="#fff" stroke="#000" stroke-width="2"/></svg>P3</div></td><td>1,608</td><td>33.7</td><td>27.9</td></tr>
                    <tr><td><div class="flex items-center"><svg class="h-[38px] w-[92px]"><path d="M63 0v19h29" fill="none" stroke="#777" stroke-width="2" stroke-dasharray="2 2"/></svg><svg class="mr-[10px] size-[33px]"><path d="M1 1h31v31H1zL32 32M32 1L1 32" fill="#fff" stroke="#000" stroke-width="2"/></svg>P4</div></td><td>1,580</td><td>33.2</td><td>27.4</td></tr>
                  </tbody>
                </table>
              </div>
            </div>
            <div class="flex h-[40px] shrink-0 items-center justify-between bg-[#f8f8f3] pr-[3px] pl-[1px]">
              <button class="flex size-[35px] items-center justify-center rounded-[5px] border-2 border-[#b4c6ee] bg-linear-to-br from-[#dbe6fe] to-[#b6caf7]" aria-label="Scroll left"><svg class="size-[30px] rotate-90"><use href="#chev"/></svg></button>
              <button class="flex size-[35px] items-center justify-center rounded-[5px] border-2 border-[#b4c6ee] bg-linear-to-br from-[#dbe6fe] to-[#b6caf7]" aria-label="Scroll right"><svg class="size-[30px] -rotate-90"><use href="#chev"/></svg></button>
            </div>
          </div>
          <div class="mb-[40px] flex w-[38px] shrink-0 flex-col items-center bg-[#fbfbf8] py-[2px]">
            <button class="flex h-[35px] w-[34px] items-center justify-center rounded-[5px] border-2 border-[#b4c6ee] bg-linear-to-br from-[#dbe6fe] to-[#b6caf7]" aria-label="Scroll up"><svg class="size-[30px] rotate-180"><use href="#chev"/></svg></button>
            <div class="mt-[2px] mb-auto flex h-[72%] w-[34px] flex-col items-center justify-center gap-[2px] rounded-[5px] border-2 border-[#a9bdea] bg-linear-to-r from-[#cfdcfd] to-[#bccffa]"><span class="h-[2px] w-[16px] bg-[#93abdf]"></span><span class="h-[2px] w-[16px] bg-[#eef3ff]"></span><span class="h-[2px] w-[16px] bg-[#93abdf]"></span><span class="h-[2px] w-[16px] bg-[#eef3ff]"></span><span class="h-[2px] w-[16px] bg-[#93abdf]"></span></div>
            <button class="flex h-[35px] w-[34px] items-center justify-center rounded-[5px] border-2 border-[#b4c6ee] bg-linear-to-br from-[#dbe6fe] to-[#b6caf7]" aria-label="Scroll down"><svg class="size-[30px]"><use href="#chev"/></svg></button>
          </div>
        </div>
      </div>
    </div>
  </section>
</main>

<script>
  // Small seeded generator, so every load draws the same events.
  let seed = 20071;
  const rnd = () => (seed = (seed * 16807) % 2147483647) / 2147483647;
  const gauss = () => Math.sqrt(-2 * Math.log(rnd())) * Math.cos(6.2832 * rnd());
  const snap = v => Math.round(v / 2) * 2;
  const dots = (pts, s) => pts.map(([x, y]) => `M${snap(x)} ${snap(y)}h${s}v${s}h-${s}z`).join('');
  const cloud = (n, cx, cy, sx, sy, slope = 0) => Array.from({ length: n }, () => {
    const dx = gauss() * sx;
    return [cx + dx, cy + gauss() * sy + dx * slope];
  });

  // Linear axis on the left: labels turned, a minor tick each fifth of a step.
  function yAxis(x, zero, step, labels, top, cx) {
    let d = '', t = '';
    for (let i = labels[0] === '0' ? 0 : 1; zero - i * step / 5 > top; i++)
      d += `M${x} ${zero - i * step / 5}h${i % 5 ? -10 : -19}`;
    labels.forEach((l, i) => {
      const y = zero - (labels[0] === '0' ? i : i + 1) * step;
      t += `<text transform="translate(${cx + 7} ${y}) rotate(-90)" text-anchor="middle" class="text-[20px]">${l}</text>`;
    });
    return `<path d="${d}" stroke="#000" stroke-width="2"/>${t}`;
  }
  // Logarithmic axis at the bottom.
  function logAxis(y, first, decade, left, right) {
    let d = '', t = '';
    for (let e = 0; e < 6; e++) for (let m = 1; m < 10; m++) {
      const x = first + (e - 1) * decade + Math.log10(m) * decade;
      if (x > left + 3 && x < right) d += `M${x} ${y}v${m === 1 ? 22 : 13}`;
    }
    for (let e = 0; e < 5; e++) {
      const x = first + e * decade;
      t += `<text x="${x - 16}" y="${y + 46}" class="text-[20px]">10</text><text x="${x + 6}" y="${y + 32}" class="text-[17px]">${e + 1}</text>`;
    }
    return `<path d="${d}" stroke="#000" stroke-width="2"/>${t}`;
  }

  // FSC / SSC scatter
  const sparse = [[310,64],[333,73],[340,85],[303,111],[289,116],[263,120],[378,116],[293,125],[324,137],[317,144],[118,137],[284,175],[286,186],[284,193],[324,175],[324,184],[333,184],[399,177],[369,194],[256,208],[310,201],[352,212],[364,221],[396,237],[289,217],[298,217],[315,215],[320,208],[323,223],[289,244],[358,264],[161,301],[221,303],[474,353],[519,364],[455,376],[191,369],[216,350],[223,364],[113,404],[127,397],[125,430],[116,451],[148,434],[418,395],[429,441],[472,458],[502,481],[479,516],[116,503],[123,489]];
  const black = [
    ...sparse,
    ...cloud(34, 320, 275, 14, 20), ...cloud(44, 312, 335, 24, 26), ...cloud(170, 326, 421, 20, 26),
    ...cloud(70, 335, 425, 45, 38), ...cloud(50, 330, 490, 40, 26), ...cloud(20, 215, 420, 45, 35),
    ...cloud(150, 326, 524, 20, 11), ...cloud(190, 193, 568, 20, 12), ...cloud(100, 195, 555, 45, 22),
    ...cloud(80, 260, 530, 35, 12), ...cloud(110, 345, 545, 20, 9), ...cloud(70, 425, 538, 26, 9),
    ...cloud(24, 455, 515, 20, 12), ...cloud(28, 140, 604, 22, 6), ...cloud(18, 115, 612, 3, 4)
  ].filter(([x, y]) => x > 110 && x < 588 && y > 56 && y < 618 && !(x > 225 && y > 562 + (330 - x) * 0.35) && !(x > 380 && y > 557));
  const redA = cloud(1100, 276, 566, 26, 9, -0.42)
    .filter(([x, y]) => x > 223 && x < 325 && y > 533 + Math.max(0, 292 - x) * 0.5 && y < 597 - Math.max(0, x - 258) * 0.45);
  let ticks = '', nums = '';
  for (let i = 1; i < 27; i++) {
    if (99.5 + i * 18.74 < 591) ticks += `M${99.5 + i * 18.74} 624v${i % 5 ? 12 : 22}`;
    if (i % 5 === 0) nums += `<text x="${97.5 + i * 18.74}" y="669" text-anchor="middle" class="text-[20px]">${i * 10}</text>`;
  }
  const gate = 'M219 593L218 575 254 548 273 537 291 532 320 531 325 550 331 566 299 578 259 601 230 597z';
  document.getElementById('fsc').innerHTML =
    yAxis(99, 623, 108.3, ['50', '100', '150', '200', '250'], 53, 72) +
    `<path d="${ticks}" stroke="#000" stroke-width="2"/>${nums}` +
    `<path d="${dots(black, 2)}"/><path d="${gate}" fill="#fff"/>` +
    `<path d="M236 573L264 556 287 546 318 538 323 559 299 572 267 588 246 592 230 589z" fill="#f00"/>` +
    `<path d="${dots(redA, 3)}" fill="#f00"/><path d="${gate}" fill="none" stroke="#000" stroke-width="2"/>`;

  // CFSE / SSC scatter
  const redB = [
    ...cloud(1500, 354, 557, 18, 8), ...cloud(300, 368, 548, 30, 13), ...cloud(60, 330, 556, 32, 8),
    ...cloud(1100, 455, 558, 14, 8), ...cloud(500, 476, 554, 25, 9), ...cloud(150, 480, 540, 24, 10),
    ...cloud(1500, 580, 556, 18, 7, -0.35), ...cloud(300, 592, 547, 20, 13, -0.2), ...cloud(70, 545, 565, 18, 6),
    [213,543],[225,564],[232,569],[265,525],[286,533],[298,531],[415,513]
  ].filter(([x, y]) => x > 205 && x < 619 && y > 512 && y < 574);
  document.getElementById('cfse').innerHTML =
    yAxis(100, 604.5, 105.35, ['50', '100', '150', '200', '250'], 52, 72) +
    logAxis(604, 160.5, 106.2, 100, 631) + `<path d="${dots(redB, 3)}" fill="#f00"/>`;

  // Histogram axes
  document.getElementById('count').innerHTML =
    yAxis(98, 836, 195.5, ['0', '50', '100', '150', '200'], 52, 71) + logAxis(836, 187, 154.8, 98, 870);
</script>
</body>
</html>
